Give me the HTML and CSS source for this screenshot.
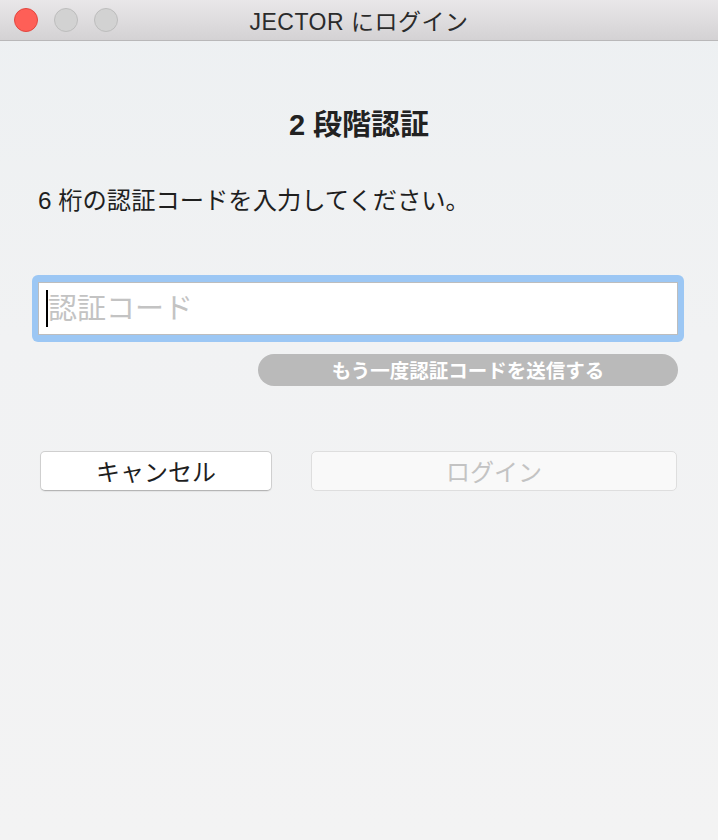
FILE: index.html
```html
<!DOCTYPE html>
<html lang="ja">
<head>
<meta charset="utf-8">
<title>JECTOR にログイン</title>
<link rel="stylesheet" href="styles.css">
</head>
<body>
<div class="window">
  <div class="titlebar">
    <div class="lights">
      <span class="light light-close"></span>
      <span class="light light-off"></span>
      <span class="light light-off"></span>
    </div>
    <div class="title">JECTOR にログイン</div>
    <div class="spacer"></div>
  </div>
  <div class="content">
    <h1 class="heading">2 段階認証</h1>
    <p class="instruction">6 桁の認証コードを入力してください。</p>
    <div class="focus-ring">
      <div class="input"><span class="caret"></span><span class="placeholder">認証コード</span></div>
    </div>
    <button class="resend">もう一度認証コードを送信する</button>
    <div class="actions">
      <button class="btn btn-cancel">キャンセル</button>
      <button class="btn btn-login">ログイン</button>
    </div>
  </div>
</div>
</body>
</html>
```

FILE: styles.css
```css
html, body {
  margin: 0;
  padding: 0;
}
body {
  font-family: "Liberation Sans", "Noto Sans CJK JP", sans-serif;
  color: #222;
}
.window {
  width: 718px;
  height: 840px;
  display: flex;
  flex-direction: column;
  background: linear-gradient(180deg, #edf0f2 0%, #f1f2f3 40%, #f3f3f3 100%);
  overflow: hidden;
}
.titlebar {
  height: 40px;
  border-bottom: 1px solid #b9b8b9;
  background: linear-gradient(180deg, #e9e7e9 0%, #d4d2d4 100%);
  display: grid;
  grid-template-columns: 1fr auto 1fr;
  align-items: center;
  flex: none;
}
.lights {
  display: flex;
  gap: 16px;
  padding-left: 14px;
}
.light {
  width: 24px;
  height: 24px;
  border-radius: 50%;
  box-sizing: border-box;
}
.light-close {
  background: #fe5f57;
  border: 1px solid #e2463f;
}
.light-off {
  background: #d2d2d2;
  border: 1px solid #bdbdbd;
}
.title {
  font-size: 23px;
  color: #2b2b2b;
  letter-spacing: 0.5px;
  padding-left: 0;
}
.content {
  display: flex;
  flex-direction: column;
  padding: 0 40px 0 38px;
}
.heading {
  margin: 64px 0 0;
  font-size: 29px;
  line-height: 40px;
  font-weight: bold;
  text-align: center;
  color: #222;
  padding-left: 2px;
}
.instruction {
  margin: 40px 0 0;
  font-size: 24.3px;
  line-height: 32px;
  color: #1f1f1f;
}
.focus-ring {
  margin: 58px -6px 0;
  padding: 7px 6px;
  background: #9cc7f4;
  border-radius: 6px;
}
.input {
  height: 53px;
  box-sizing: border-box;
  background: #fff;
  border: 1px solid #bdbdbd;
  display: flex;
  align-items: center;
  padding-left: 7px;
}
.caret {
  width: 2px;
  height: 37px;
  background: #000;
  flex: none;
}
.placeholder {
  font-size: 29px;
  color: #c3c3c3;
  line-height: 1;
  margin-top: 1px;
}
.resend {
  align-self: flex-end;
  margin-top: 12px;
  width: 420px;
  height: 32px;
  border: none;
  border-radius: 16px;
  background: #bababa;
  color: #fff;
  font-family: "Noto Sans CJK JP", sans-serif;
  font-weight: bold;
  font-size: 19.5px;
  line-height: 1;
  padding: 0;
}
.actions {
  margin-top: 65px;
  display: flex;
  gap: 39px;
  padding: 0 1px 0 2px;
}
.btn {
  height: 40px;
  box-sizing: border-box;
  border-radius: 5px;
  font-family: "Noto Sans CJK JP", sans-serif;
  font-size: 24px;
  line-height: 1;
  padding: 0;
}
.btn-cancel {
  width: 232px;
  background: #fff;
  border: 1px solid #cfcfcf;
  border-bottom-color: #b5b5b5;
  box-shadow: 0 1px 1px rgba(0, 0, 0, 0.06);
  color: #1e1e1e;
}
.btn-login {
  flex: 1;
  background: #f9f9f9;
  border: 1px solid #dedede;
  color: #c3c3c3;
}
```
